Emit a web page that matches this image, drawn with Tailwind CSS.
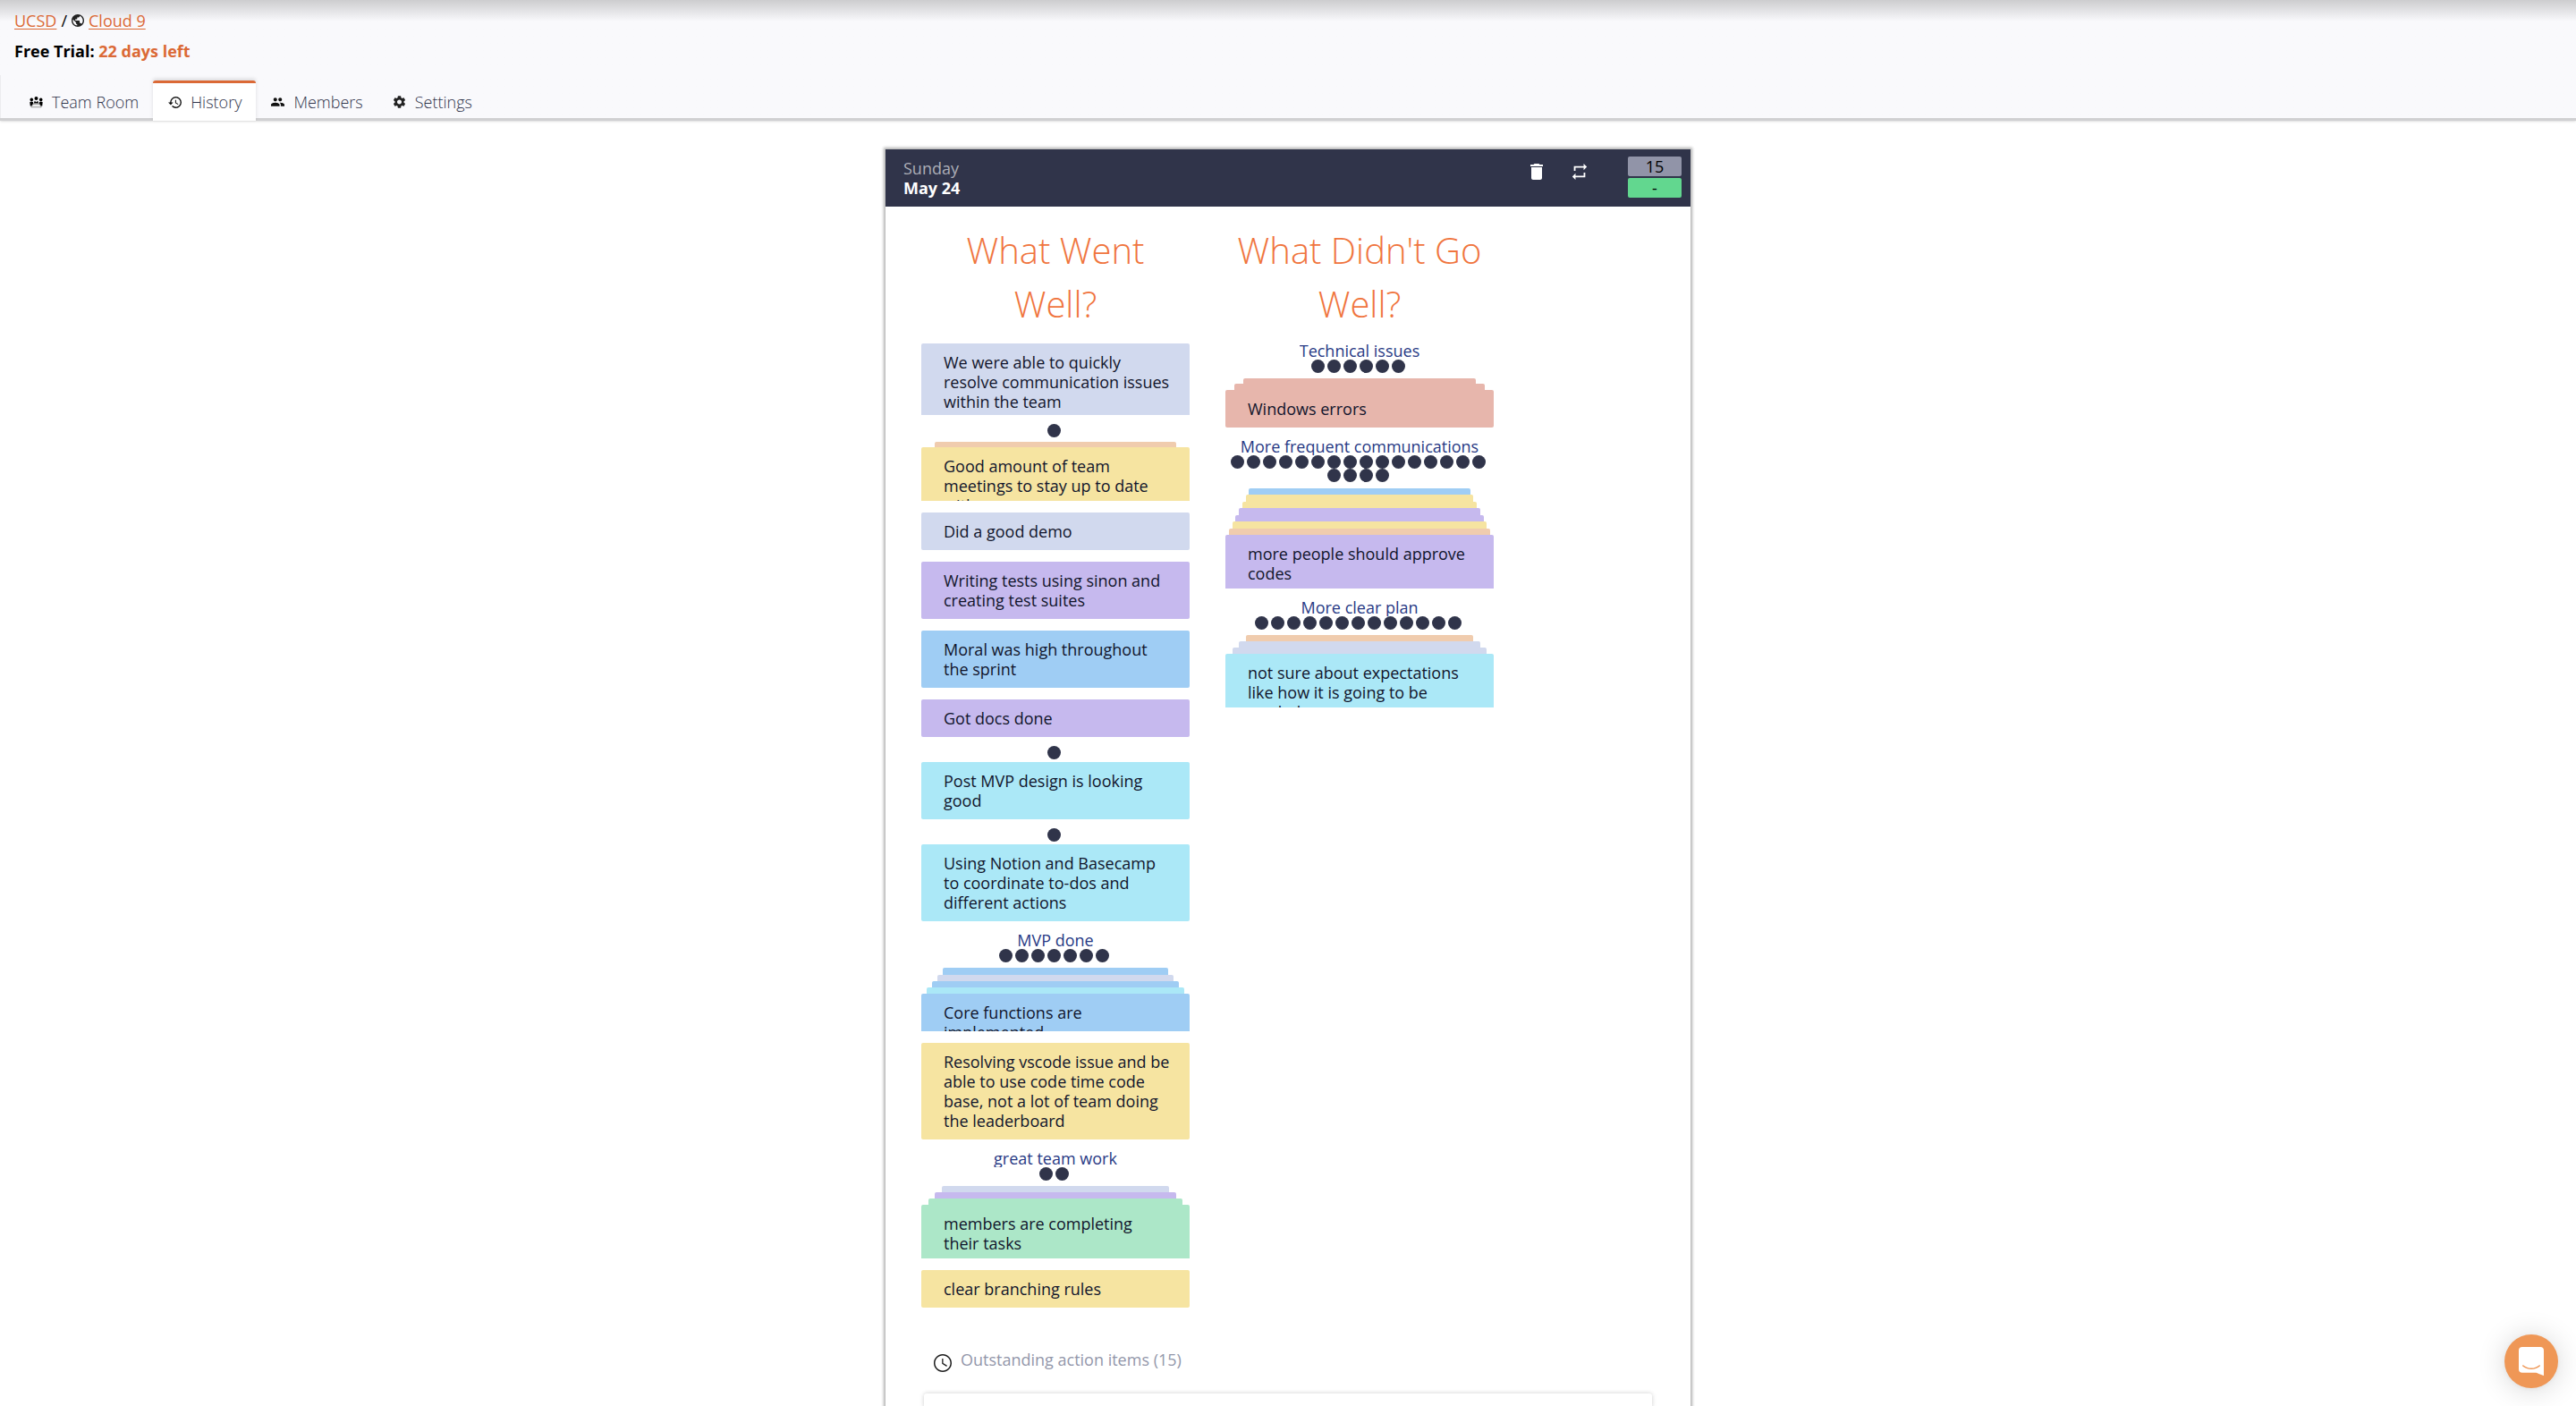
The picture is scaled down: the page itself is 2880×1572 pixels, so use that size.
<!DOCTYPE html>
<html lang="en">
<head>
<meta charset="utf-8">
<title>Cloud 9 – History</title>
<script src="https://cdn.jsdelivr.net/npm/@tailwindcss/browser@4"></script>
</head>
<body class="flex h-screen flex-col overflow-hidden bg-white font-['Open_Sans',sans-serif] text-[18px] leading-[22px] text-[#11152c]">

<header class="border-b-3 border-[#d0d0d2] bg-[#f9f9fc] bg-linear-to-b from-[#cdcdcf] to-[#f9f9fc] to-[24px] shadow-sm">
  <div class="px-4 pt-[6px] pb-[10px] leading-[34px] text-black">
    <p class="flex items-center gap-[5px]">
      <a href="#" class="text-[#db6936] underline underline-offset-2">UCSD</a>
      <span>/</span>
      <svg viewBox="2 2 20 20" class="size-[14px]" fill="#222"><path d="M12 2C6.48 2 2 6.48 2 12s4.48 10 10 10 10-4.480 10-10S17.520 2 12 2zm-1 17.930c-3.950-.490-7-3.850-7-7.930 0-.620.080-1.210.210-1.790L9 15v1c0 1.100.9 2 2 2v1.930zm6.900-2.540c-.260-.810-1-1.390-1.900-1.390h-1v-3c0-.550-.450-1-1-1H8v-2h2c.550 0 1-.450 1-1V7h2c1.100 0 2-.9 2-2v-.410c2.930 1.190 5 4.060 5 7.410 0 2.080-.8 3.970-2.100 5.390z"/></svg>
      <a href="#" class="text-[#db6936] underline underline-offset-2">Cloud 9</a>
    </p>
    <p class="font-bold">Free Trial: <span class="text-[#db6936]">22 days left</span></p>
  </div>
  <nav class="flex h-[48px] items-end border-l border-[#ececef] pl-[15px] font-light text-[#30344b]">
    <a href="#" class="-mb-[3px] flex h-[45px] items-center gap-[10px] border-t-3 border-transparent pr-4 pl-[17px]">
      <svg viewBox="0 0 15 13" class="h-[13px] w-[15px]" fill="#000"><circle cx="7.500" cy="2" r="2"/><circle cx="2.300" cy="3.400" r="1.800"/><circle cx="12.700" cy="3.400" r="1.800"/><path d="M.3 6.200Q2.300 4.600 4 6.200L4.400 8.500 2.400 10.500H.8zM14.700 6.200Q12.700 4.600 11 6.200L10.600 8.500 12.600 10.500h1.600zM4.800 7.600 5.800 4.800 7.500 6.200 9.200 4.800l1 2.800z"/><path d="M3.800 8.300h7.400l2 3.500H1.800z" fill="#eee" stroke="#777" stroke-width=".7"/></svg>
      Team Room
    </a>
    <a href="#" aria-current="page" class="-mb-[3px] flex h-[45px] items-center gap-[10px] rounded-t-[3px] border-t-3 border-[#db6936] bg-white pr-4 pl-[17px] shadow-[0_-2px_4px_rgba(0,0,0,0.12)]">
      <svg viewBox="1 3 21 18" class="h-[13px] w-[15px]" fill="#111"><path d="M13 3a9 9 0 0 0-9 9H1l3.890 3.890.070.140L9 12H6c0-3.870 3.130-7 7-7s7 3.130 7 7-3.130 7-7 7c-1.930 0-3.680-.790-4.940-2.060l-1.420 1.420A8.954 8.954 0 0 0 13 21a9 9 0 0 0 0-18zm-1 5v5l4.280 2.540.720-1.210-3.500-2.080V8H12z"/></svg>
      History
    </a>
    <a href="#" class="-mb-[3px] flex h-[45px] items-center gap-[10px] border-t-3 border-transparent pr-4 pl-[17px]">
      <svg viewBox="1 5 22 14" class="h-[10px] w-[15px]" fill="#111"><path d="M16 11c1.660 0 2.990-1.340 2.990-3S17.660 5 16 5s-3 1.340-3 3 1.340 3 3 3zm-8 0c1.660 0 2.990-1.340 2.990-3S9.660 5 8 5 5 6.340 5 8s1.340 3 3 3zm0 2c-2.330 0-7 1.170-7 3.500V19h14v-2.500c0-2.330-4.670-3.500-7-3.500zm8 0c-.290 0-.620.020-.970.050 1.160.840 1.970 1.970 1.970 3.450V19h6v-2.500c0-2.330-4.670-3.500-7-3.500z"/></svg>
      Members
    </a>
    <a href="#" class="-mb-[3px] flex h-[45px] items-center gap-[10px] border-t-3 border-transparent pr-4 pl-[17px]">
      <svg viewBox="2 2 20 20" class="h-[14px] w-[15px]" fill="#222"><path d="M19.140 12.940c.040-.3.060-.610.060-.940 0-.320-.020-.640-.070-.940l2.030-1.580c.180-.140.230-.410.120-.610l-1.920-3.320c-.120-.220-.370-.290-.590-.220l-2.390.960c-.5-.380-1.030-.7-1.620-.940l-.360-2.540c-.040-.240-.240-.410-.480-.410h-3.840c-.240 0-.430.170-.470.410l-.360 2.540c-.590.240-1.130.570-1.620.940l-2.390-.960c-.220-.080-.470 0-.590.220L2.740 8.870c-.120.210-.080.470.120.610l2.030 1.580c-.050.3-.090.630-.090.940s.020.640.070.940l-2.030 1.580c-.180.140-.230.410-.120.610l1.920 3.320c.120.220.370.290.590.220l2.390-.960c.5.380 1.030.7 1.620.940l.360 2.540c.050.240.240.410.480.410h3.840c.240 0 .440-.170.470-.410l.360-2.540c.590-.240 1.130-.560 1.620-.940l2.390.960c.220.080.470 0 .590-.220l1.920-3.320c.120-.220.070-.470-.120-.610l-2.010-1.580zM12 15.600c-1.980 0-3.600-1.620-3.600-3.600s1.620-3.600 3.600-3.600 3.600 1.620 3.600 3.600-1.620 3.600-3.600 3.600z"/></svg>
      Settings
    </a>
  </nav>
</header>

<main class="flex min-h-0 flex-1 flex-col items-center pt-8">
  <article class="flex w-full max-w-[900px] flex-1 flex-col bg-white shadow-[0_0_3px_2px_rgba(0,0,0,0.3)]">
    <div class="flex h-16 shrink-0 items-start bg-[#30344a] pt-2 pr-[10px] pl-5">
      <div class="flex-1 pt-[2px]">
        <p class="text-[#acaeb7]">Sunday</p>
        <p class="font-bold text-white">May 24</p>
      </div>
      <button type="button" aria-label="Delete" class="mt-2 mr-8"><svg viewBox="5 3 14 18" class="h-[18px] w-[14px]" fill="#fff"><path d="M6 19c0 1.100.9 2 2 2h8c1.100 0 2-.9 2-2V7H6v12zM19 4h-3.500l-1-1h-5l-1 1H5v2h14V4z"/></svg></button>
      <button type="button" aria-label="Repeat" class="mt-[7px] mr-[45px]"><svg viewBox="3 1 18 22" class="h-[20px] w-[18px]" fill="#fff"><path d="M7 7h10v3l4-4-4-4v3H5v6h2V7zm10 10H7v-3l-4 4 4 4v-3h12v-6h-2v4z"/></svg></button>
      <div class="flex w-[60px] flex-col gap-[2px] text-center text-black">
        <span class="rounded-[2px] bg-[#9194a8]">15</span>
        <span class="rounded-[2px] bg-[#62d78f]">-</span>
      </div>
    </div>

    <div class="grid shrink-0 grid-cols-[300px_300px] gap-10 px-10 pt-[19px] [&_i]:mr-[3px] [&_i]:size-[15px] [&_i]:rounded-full [&_i]:bg-[#30344a]">
      <!-- What went well -->
      <section class="flex flex-col">
        <h2 class="mb-[14px] text-center text-[40px] leading-[60px] font-light text-[#f0753e]">What Went Well?</h2>

        <div class="h-20 overflow-hidden rounded-t-[2px] bg-[#d1d9ee] py-[10px] pr-[22px] pl-[25px]">We were able to quickly resolve communication issues within the team</div>

        <div class="mt-[10px] flex flex-col items-center">
          <div class="mb-[5px] flex"><i></i></div>
          <div class="h-[6px] w-[270px] rounded-t-[2px] bg-[#f0ccae]"></div>
          <div class="h-[60px] w-full overflow-hidden rounded-t-[2px] bg-[#f6e4a1] py-[10px] pr-[22px] pl-[25px]">Good amount of team meetings to stay up to date with</div>
        </div>

        <div class="mt-[13px] rounded-[2px] bg-[#d1d9ee] py-[10px] pr-[22px] pl-[25px]">Did a good demo</div>
        <div class="mt-[13px] rounded-[2px] bg-[#c6b9ee] py-[10px] pr-[22px] pl-[25px]">Writing tests using sinon and creating test suites</div>
        <div class="mt-[13px] rounded-[2px] bg-[#9fcdf4] py-[10px] pr-[22px] pl-[25px]">Moral was high throughout the sprint</div>
        <div class="mt-[13px] rounded-[2px] bg-[#c6b9ee] py-[10px] pr-[22px] pl-[25px]">Got docs done</div>

        <div class="mt-[10px] flex flex-col items-center">
          <div class="mb-[3px] flex"><i></i></div>
          <div class="w-full rounded-[2px] bg-[#abe8f7] py-[10px] pr-[22px] pl-[25px]">Post MVP design is looking good</div>
        </div>
        <div class="mt-[10px] flex flex-col items-center">
          <div class="mb-[3px] flex"><i></i></div>
          <div class="w-full rounded-[2px] bg-[#abe8f7] py-[10px] pr-[22px] pl-[25px]">Using Notion and Basecamp to coordinate to-dos and different actions</div>
        </div>

        <div class="mt-[13px] flex flex-col items-center">
          <h3 class="h-[18px] overflow-hidden leading-4 text-[#283a85]">MVP done</h3>
          <div class="mb-[6px] flex"><i></i><i></i><i></i><i></i><i></i><i></i><i></i></div>
          <div class="h-[8px] w-[252px] rounded-t-[2px] bg-[#9fcdf4]"></div>
          <div class="h-[7px] w-[264px] rounded-t-[2px] bg-[#d1d9ee]"></div>
          <div class="h-[7px] w-[276px] rounded-t-[2px] bg-[#9fcdf4]"></div>
          <div class="h-[7px] w-[288px] rounded-t-[2px] bg-[#abe8f7]"></div>
          <div class="h-[42px] w-full overflow-hidden rounded-t-[2px] bg-[#9fcdf4] py-[10px] pr-[22px] pl-[25px]">Core functions are implemented</div>
        </div>

        <div class="mt-[13px] rounded-[2px] bg-[#f6e4a1] py-[10px] pr-[22px] pl-[25px]">Resolving vscode issue and be able to use code time code base, not a lot of team doing the leaderboard</div>

        <div class="mt-[13px] flex flex-col items-center">
          <h3 class="h-[18px] overflow-hidden leading-4 text-[#283a85]">great team work</h3>
          <div class="mb-[6px] flex"><i></i><i></i></div>
          <div class="h-[7px] w-[254px] rounded-t-[2px] bg-[#d1d9ee]"></div>
          <div class="h-[7px] w-[270px] rounded-t-[2px] bg-[#c6b9ee]"></div>
          <div class="h-[7px] w-[284px] rounded-t-[2px] bg-[#ace7c8]"></div>
          <div class="h-[60px] w-full overflow-hidden rounded-t-[2px] bg-[#ace7c8] py-[10px] pr-[22px] pl-[25px]">members are completing their tasks</div>
        </div>

        <div class="mt-[13px] rounded-[2px] bg-[#f6e4a1] py-[10px] pr-[22px] pl-[25px]">clear branching rules</div>
      </section>

      <!-- What didn't go well -->
      <section class="flex flex-col">
        <h2 class="mb-[14px] text-center text-[40px] leading-[60px] font-light text-[#f0753e]">What Didn't Go Well?</h2>

        <div class="flex flex-col items-center">
          <h3 class="h-[18px] overflow-hidden leading-4 text-[#283a85]">Technical issues</h3>
          <div class="mb-[6px] flex"><i></i><i></i><i></i><i></i><i></i><i></i></div>
          <div class="h-[6px] w-[260px] rounded-t-[2px] bg-[#e7b6ac]"></div>
          <div class="h-[7px] w-[280px] rounded-t-[2px] bg-[#e7b6ac]"></div>
          <div class="w-full rounded-[2px] bg-[#e7b6ac] py-[10px] pr-[22px] pl-[25px]">Windows errors</div>
        </div>

        <div class="mt-[13px] flex flex-col items-center">
          <h3 class="h-[18px] overflow-hidden leading-4 text-[#283a85]">More frequent communications</h3>
          <div class="mb-[7px] flex flex-wrap justify-center"><i></i><i></i><i></i><i></i><i></i><i></i><i></i><i></i><i></i><i></i><i></i><i></i><i></i><i></i><i></i><i></i><i></i><i></i><i></i><i></i></div>
          <div class="h-[7px] w-[248px] rounded-t-[2px] bg-[#9fcdf4]"></div>
          <div class="h-[8px] w-[254px] rounded-t-[2px] bg-[#f6e4a1]"></div>
          <div class="h-[7px] w-[262px] rounded-t-[2px] bg-[#f6e4a1]"></div>
          <div class="h-[8px] w-[270px] rounded-t-[2px] bg-[#c6b9ee]"></div>
          <div class="h-[7px] w-[278px] rounded-t-[2px] bg-[#c6b9ee]"></div>
          <div class="h-[8px] w-[284px] rounded-t-[2px] bg-[#f6e4a1]"></div>
          <div class="h-[7px] w-[292px] rounded-t-[2px] bg-[#f0ccae]"></div>
          <div class="h-[60px] w-full overflow-hidden rounded-t-[2px] bg-[#c6b9ee] py-[10px] pr-[22px] pl-[25px]">more people should approve codes</div>
        </div>

        <div class="mt-[13px] flex flex-col items-center">
          <h3 class="h-[18px] overflow-hidden leading-4 text-[#283a85]">More clear plan</h3>
          <div class="mb-[6px] flex"><i></i><i></i><i></i><i></i><i></i><i></i><i></i><i></i><i></i><i></i><i></i><i></i><i></i></div>
          <div class="h-[7px] w-[254px] rounded-t-[2px] bg-[#f0ccae]"></div>
          <div class="h-[7px] w-[270px] rounded-t-[2px] bg-[#d1d9ee]"></div>
          <div class="h-[7px] w-[284px] rounded-t-[2px] bg-[#d1d9ee]"></div>
          <div class="h-[60px] w-full overflow-hidden rounded-t-[2px] bg-[#abe8f7] py-[10px] pr-[22px] pl-[25px]">not sure about expectations like how it is going to be graded</div>
        </div>
      </section>
    </div>

    <!-- Outstanding action items -->
    <section class="flex flex-1 flex-col px-[43px] pt-[47px]">
      <h3 class="flex shrink-0 items-start gap-[10px] pb-6 pl-[11px] text-[#9397aa]">
        <svg viewBox="2 2 20 20" class="mt-[5px] size-5" fill="#1c1c1c"><path d="M11.990 2C6.470 2 2 6.480 2 12s4.470 10 9.990 10C17.520 22 22 17.520 22 12S17.520 2 11.990 2zM12 20.500c-4.700 0-8.500-3.800-8.500-8.500S7.300 3.500 12 3.500s8.500 3.800 8.500 8.500-3.800 8.500-8.500 8.500zM12.500 7H11.200v5.800l5 3.100.750-1.230-4.450-2.670z"/></svg>
        Outstanding action items (15)
      </h3>
      <div class="min-h-4 flex-1 rounded-t-[3px] bg-white shadow-[0_0_5px_rgba(0,0,0,0.2)]"></div>
    </section>
  </article>
</main>

<button type="button" aria-label="Open chat" class="fixed right-5 bottom-5 flex size-[60px] items-center justify-center rounded-full bg-[#ef9756] shadow-[0_1px_6px_rgba(0,0,0,0.06),0_2px_32px_rgba(0,0,0,0.16)]">
  <svg viewBox="0 0 28 32" class="h-8 w-7"><path d="M4 0h20a4 4 0 0 1 4 4v28s-4.700-1.700-8.700-3.300H4a4 4 0 0 1-4-4V4a4 4 0 0 1 4-4z" fill="#fff"/><path d="M4.800 21c2.600 2.200 5.800 3.300 9.200 3.300s6.600-1.100 9.200-3.300" fill="none" stroke="#ef9756" stroke-width="1.600" stroke-linecap="round"/></svg>
</button>
</body>
</html>
